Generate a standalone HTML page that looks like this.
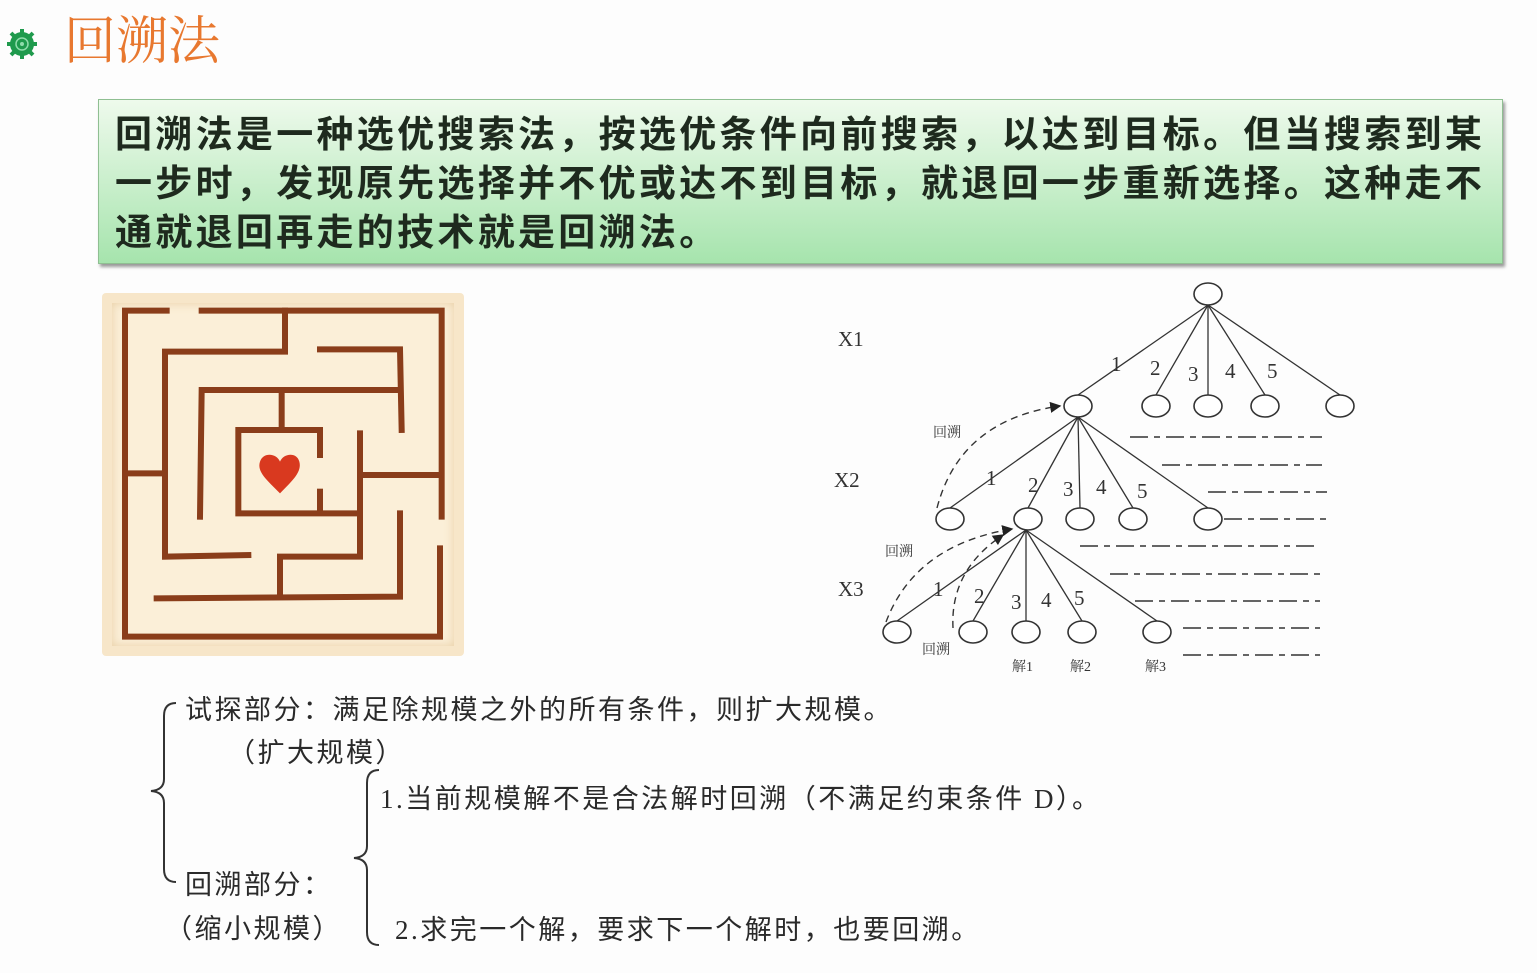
<!DOCTYPE html>
<html><head><meta charset="utf-8"><style>
body{margin:0;width:1537px;height:973px;background:#fdfdfd;position:relative;overflow:hidden;font-family:"Liberation Sans","Noto Sans CJK SC",sans-serif}
.a{position:absolute;white-space:nowrap}
.box{position:absolute;left:98px;top:99px;width:1403px;height:163px;background:linear-gradient(#eefaec,#a6e4ad);border:1px solid #8fbf92;box-shadow:2px 3px 3px #9a9a9a}
.box div{position:absolute;left:16px;font-weight:bold;font-size:37px;letter-spacing:3.3px;color:#1e2a1e;line-height:49px}
.t{font-size:27px;color:#2a2a2a;letter-spacing:2.5px;font-family:"Liberation Serif","Noto Sans CJK SC",sans-serif}
</style></head><body>
<svg class="a" style="left:5px;top:27px" width="34" height="34" viewBox="0 0 34 34">
<g fill="#1f9a4d"><circle cx="17" cy="17" r="12"/><g stroke="#1f9a4d" stroke-width="4"><line x1="17" y1="2" x2="17" y2="32"/><line x1="2" y1="17" x2="32" y2="17"/><line x1="6" y1="6" x2="28" y2="28"/><line x1="28" y1="6" x2="6" y2="28"/></g></g>
<circle cx="17" cy="17" r="6" fill="none" stroke="#8fdcab" stroke-width="1.5"/><circle cx="17" cy="17" r="2" fill="#8fdcab"/></svg>
<div class="a" style="left:64px;top:10px;font-size:52px;color:#e8782f;font-family:'Liberation Serif','Noto Serif CJK SC',serif;line-height:66px">回溯法</div>
<div class="box">
<div style="top:10px">回溯法是一种选优搜索法，按选优条件向前搜索，以达到目标。但当搜索到某</div>
<div style="top:59px">一步时，发现原先选择并不优或达不到目标，就退回一步重新选择。这种走不</div>
<div style="top:108px">通就退回再走的技术就是回溯法。</div>
</div>
<div class="a" style="left:102px;top:293px;width:362px;height:363px;background:#f7e6c9;border-radius:4px"></div>
<div class="a" style="left:112px;top:303px;width:342px;height:343px;background:#fbefd8;box-shadow:inset 0 0 10px #e9cfa6"></div>
<svg class="a" style="left:100px;top:290px" width="370" height="370" viewBox="0 0 1110 1110">
<g fill="none" stroke="#8a3d1a" stroke-width="18" stroke-linecap="square">
<polyline points="200,62 75,62 75,1040 1020,1040 1020,775"/>
<polyline points="305,62 1025,62 1025,680"/>
<polyline points="555,62 555,185 195,185 195,800 445,795"/>
<line x1="80" y1="550" x2="190" y2="550"/>
<polyline points="660,178 900,178 905,420"/>
<polyline points="300,680 305,300 895,300"/>
<polyline points="545,300 545,420"/>
<polyline points="660,495 660,420 415,420 415,670 780,670"/>
<line x1="660" y1="605" x2="660" y2="665"/>
<polyline points="780,430 780,800 540,800 540,915"/>
<polyline points="170,925 900,920 900,670"/>
<line x1="785" y1="555" x2="1015" y2="555"/>
</g>
<path d="M540,610 C500,570 470,545 480,515 C490,485 530,490 540,515 C550,490 590,485 598,515 C606,545 580,570 540,610Z" fill="#d9391f"/>
</svg>
<svg class="a" style="left:0;top:0" width="1537" height="973">
<defs><marker id="ar" markerWidth="8" markerHeight="8" refX="7" refY="4" orient="auto"><path d="M0,0 L8,4 L0,8Z" fill="#222"/></marker></defs>
<g stroke="#333" stroke-width="1.3" fill="none">
<line x1="1208" y1="305" x2="1078" y2="395"/><line x1="1208" y1="305" x2="1156" y2="395"/><line x1="1208" y1="305" x2="1208" y2="395"/><line x1="1208" y1="305" x2="1265" y2="395"/><line x1="1208" y1="305" x2="1340" y2="395"/>
<line x1="1078" y1="417" x2="950" y2="508"/><line x1="1078" y1="417" x2="1028" y2="508"/><line x1="1078" y1="417" x2="1080" y2="508"/><line x1="1078" y1="417" x2="1133" y2="508"/><line x1="1078" y1="417" x2="1208" y2="508"/>
<line x1="1026" y1="530" x2="897" y2="621"/><line x1="1026" y1="530" x2="973" y2="621"/><line x1="1026" y1="530" x2="1026" y2="621"/><line x1="1026" y1="530" x2="1082" y2="621"/><line x1="1026" y1="530" x2="1157" y2="621"/>
<g fill="#fff" stroke-width="1.6">
<ellipse cx="1208" cy="294" rx="14" ry="11"/>
<ellipse cx="1078" cy="406" rx="14" ry="11"/><ellipse cx="1156" cy="406" rx="14" ry="11"/><ellipse cx="1208" cy="406" rx="14" ry="11"/><ellipse cx="1265" cy="406" rx="14" ry="11"/><ellipse cx="1340" cy="406" rx="14" ry="11"/>
<ellipse cx="950" cy="519" rx="14" ry="11"/><ellipse cx="1028" cy="519" rx="14" ry="11"/><ellipse cx="1080" cy="519" rx="14" ry="11"/><ellipse cx="1133" cy="519" rx="14" ry="11"/><ellipse cx="1208" cy="519" rx="14" ry="11"/>
<ellipse cx="897" cy="632" rx="14" ry="11"/><ellipse cx="973" cy="632" rx="14" ry="11"/><ellipse cx="1026" cy="632" rx="14" ry="11"/><ellipse cx="1082" cy="632" rx="14" ry="11"/><ellipse cx="1157" cy="632" rx="14" ry="11"/>
</g>
<g stroke-dasharray="7,5" stroke-width="1.4">
<path d="M937,508 Q960,420 1060,406" marker-end="url(#ar)"/>
<path d="M886,622 Q915,545 1012,529" marker-end="url(#ar)"/>
<path d="M953,628 Q950,570 1003,535" marker-end="url(#ar)"/>
</g>
<g stroke-dasharray="18,6,6,6" stroke-width="1.5">
<line x1="1130" y1="437" x2="1322" y2="437"/><line x1="1162" y1="465" x2="1322" y2="465"/><line x1="1208" y1="492" x2="1327" y2="492"/><line x1="1224" y1="519" x2="1327" y2="519"/><line x1="1080" y1="546" x2="1320" y2="546"/><line x1="1110" y1="574" x2="1320" y2="574"/><line x1="1135" y1="601" x2="1320" y2="601"/><line x1="1183" y1="628" x2="1320" y2="628"/><line x1="1183" y1="655" x2="1320" y2="655"/>
</g>
<g stroke="#333" stroke-width="2"><path d="M176,703 Q164,703 164,716 L164,779 Q164,790 151,791 Q164,792 164,803 L164,869 Q164,882 176,882"/><path d="M379,770 Q367,770 367,783 L367,846 Q367,857 354,858 Q367,859 367,870 L367,932 Q367,945 379,945"/></g>
</g>
<g font-family="Liberation Serif,Noto Serif CJK SC,serif" fill="#333" font-size="21">
<text x="838" y="346">X1</text><text x="834" y="487">X2</text><text x="838" y="596">X3</text>
<text x="1111" y="371">1</text><text x="1150" y="375">2</text><text x="1188" y="381">3</text><text x="1225" y="378">4</text><text x="1267" y="378">5</text>
<text x="986" y="485">1</text><text x="1028" y="492">2</text><text x="1063" y="496">3</text><text x="1096" y="494">4</text><text x="1137" y="498">5</text>
<text x="933" y="596">1</text><text x="974" y="603">2</text><text x="1011" y="609">3</text><text x="1041" y="607">4</text><text x="1074" y="605">5</text>
<g font-size="14"><text x="933" y="437">回溯</text><text x="885" y="556">回溯</text><text x="922" y="654">回溯</text><text x="1012" y="671">解1</text><text x="1070" y="671">解2</text><text x="1145" y="671">解3</text></g>
</g>
</svg>
<div class="a t" style="left:185px;top:688px">试探部分：满足除规模之外的所有条件，则扩大规模。</div>
<div class="a t" style="left:228px;top:731px">（扩大规模）</div>
<div class="a t" style="left:380px;top:777px">1.当前规模解不是合法解时回溯（不满足约束条件 D）。</div>
<div class="a t" style="left:185px;top:863px">回溯部分：</div>
<div class="a t" style="left:165px;top:907px">（缩小规模）</div>
<div class="a t" style="left:395px;top:908px">2.求完一个解，要求下一个解时，也要回溯。</div>
</body></html>
